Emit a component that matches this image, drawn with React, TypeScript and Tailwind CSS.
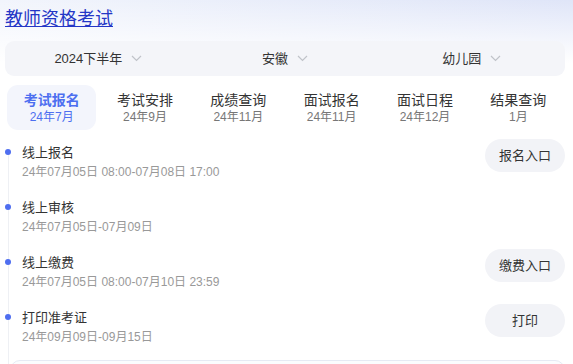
import React from "react";

const tabs = [
  { title: "考试报名", sub: "24年7月" },
  { title: "考试安排", sub: "24年9月" },
  { title: "成绩查询", sub: "24年11月" },
  { title: "面试报名", sub: "24年11月" },
  { title: "面试日程", sub: "24年12月" },
  { title: "结果查询", sub: "1月" },
];

const steps = [
  { title: "线上报名", time: "24年07月05日 08:00-07月08日 17:00", action: "报名入口" },
  { title: "线上审核", time: "24年07月05日-07月09日", action: null },
  { title: "线上缴费", time: "24年07月05日 08:00-07月10日 23:59", action: "缴费入口" },
  { title: "打印准考证", time: "24年09月09日-09月15日", action: "打印" },
];

function Chevron() {
  return (
    <svg width="11" height="7" viewBox="0 0 11 7" className="ml-[9px]">
      <path d="M1 1l4.5 4.5L10 1" fill="none" stroke="#c0c3c9" strokeWidth="1.2" />
    </svg>
  );
}

export default function App() {
  const filters = ["2024下半年", "安徽", "幼儿园"];
  return (
    <div
      className="relative w-[573px] h-[364px] overflow-hidden bg-white"
      style={{ fontFamily: '"Liberation Sans", "Noto Sans CJK SC", sans-serif' }}
    >
      <div className="absolute inset-x-0 top-0 h-[90px] bg-[linear-gradient(to_bottom,rgba(255,255,255,0)_0%,#ffffff_70%),linear-gradient(to_right,#f2f5fc,#dfe5f8)]" />
      <div className="relative pl-[5px] pr-[8px]">
        <div className="h-[41px] pt-[6px]">
          <a href="#" className="text-[18px] leading-[26px] text-[#2436c6] underline">
            教师资格考试
          </a>
        </div>

        <div className="flex h-[35px] items-center rounded-[9px] bg-[#f4f5f9]">
          {filters.map((f) => (
            <div key={f} className="flex flex-1 items-center justify-center text-[13px] text-[#333]">
              <span>{f}</span>
              <Chevron />
            </div>
          ))}
        </div>

        <div className="mt-[9px] flex">
          {tabs.map((t, i) => (
            <div key={t.title} className="flex-1 px-[2px]">
              <div
                className={
                  "flex h-[45px] flex-col items-center justify-center rounded-[11px] " +
                  (i === 0 ? "bg-[#f3f5fc]" : "")
                }
              >
                <div
                  className={
                    "text-[14px] leading-[18px] " +
                    (i === 0 ? "font-bold text-[#4d6ff0]" : "text-[#333]")
                  }
                >
                  {t.title}
                </div>
                <div
                  className={
                    "text-[12px] leading-[16px] " + (i === 0 ? "text-[#4d6ff0]" : "text-[#777]")
                  }
                >
                  {t.sub}
                </div>
              </div>
            </div>
          ))}
        </div>

        <div className="relative mt-[14px]">
          <div className="absolute left-[2.5px] top-[8px] bottom-[-40px] w-px bg-[#eef0f4]" />
          {steps.map((s) => (
            <div key={s.title} className="relative flex h-[55px] items-start">
              <div className="absolute left-0 top-[5px] h-[6px] w-[6px] rounded-full bg-[#4f6ef0]" />
              <div className="flex-1 pl-[17px]">
                <div className="text-[13px] leading-[17px] text-[#333]">{s.title}</div>
                <div className="mt-[3px] text-[12px] leading-[16px] text-[#999]">{s.time}</div>
              </div>
              {s.action && (
                <div className="mt-[-5px] flex h-[33px] w-[80px] items-center justify-center rounded-full bg-[#f2f3f7] text-[13px] text-[#333]">
                  {s.action}
                </div>
              )}
            </div>
          ))}
          <div className="relative ml-[5px] mt-[-4px] h-[20px] rounded-t-[10px] border border-[#e6eaf4] bg-[#fbfcfe]" />
        </div>
      </div>
    </div>
  );
}
